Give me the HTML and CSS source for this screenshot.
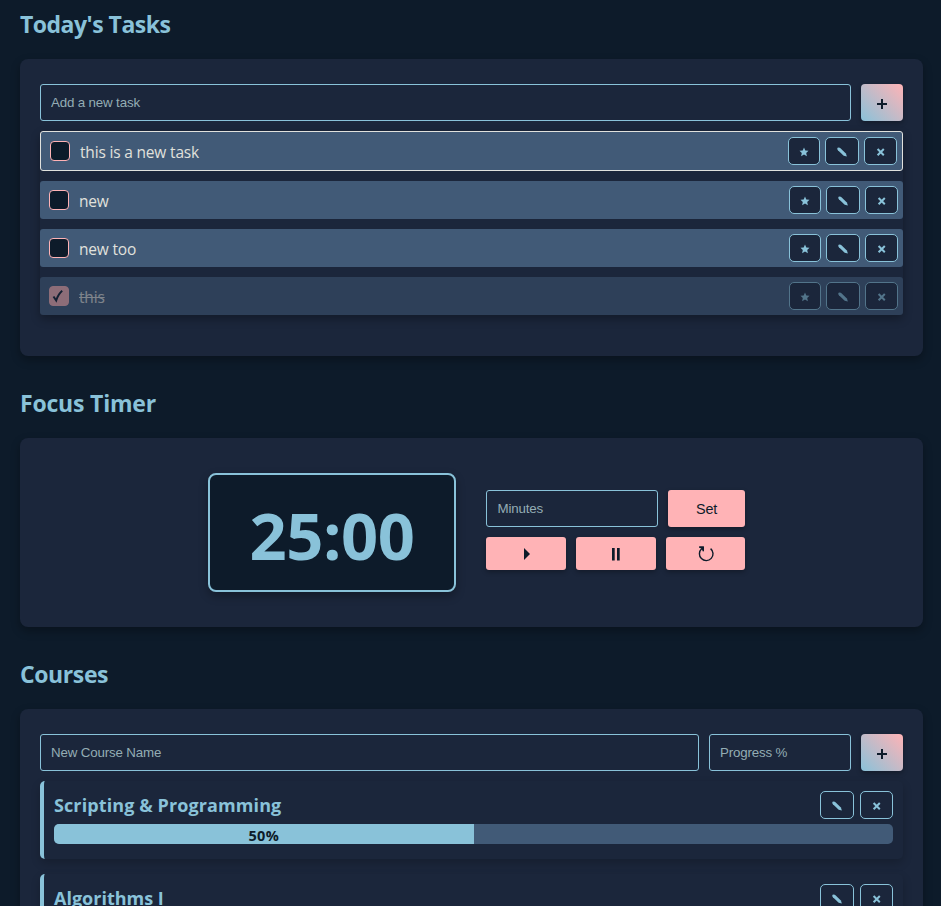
FILE: index.html
```html
<!DOCTYPE html>
<html lang="en">
<head>
<meta charset="utf-8">
<title>Study Dashboard</title>
<link rel="stylesheet" href="styles.css">
</head>
<body>
<svg class="sprite" width="0" height="0" aria-hidden="true">
  <symbol id="star" viewBox="0 0 10 10"><path d="M5 .6 6.3 3.5 9.5 3.8 7.2 6 7.9 9.2 5 7.6 2.1 9.2 2.8 6 .5 3.8 3.7 3.5Z"/></symbol>
  <symbol id="pencil" viewBox="0 0 10 10"><path d="M.2 2 .6 .7 1.9 .4 3.2 .9 8.9 6.4 9.9 9.6 6.7 8.8 .9 3.2Z"/></symbol>
  <symbol id="cross" viewBox="0 0 10 10"><path d="M1.6 2 7.8 8.2M7.8 2 1.6 8.2" fill="none" stroke="currentColor" stroke-width="2"/></symbol>
</svg>
<main>
  <h2 class="h-tasks">Today's Tasks</h2>
  <section class="card tasks">
    <div class="form-row">
      <input class="field grow" type="text" placeholder="Add a new task">
      <button class="add"><svg width="12" height="12" viewBox="0 0 12 12"><path d="M6 1V11M1 6H11"/></svg></button>
    </div>
    <ul class="task-list">
      <li class="task starred"><span class="check"></span><span class="name">this is a new task</span>
        <button class="icon w32"><svg><use href="#star"/></svg></button><button class="icon w34"><svg><use href="#pencil"/></svg></button><button class="icon w33"><svg><use href="#cross"/></svg></button></li>
      <li class="task"><span class="check"></span><span class="name">new</span>
        <button class="icon w32"><svg><use href="#star"/></svg></button><button class="icon w34"><svg><use href="#pencil"/></svg></button><button class="icon w33"><svg><use href="#cross"/></svg></button></li>
      <li class="task"><span class="check"></span><span class="name">new too</span>
        <button class="icon w32"><svg><use href="#star"/></svg></button><button class="icon w34"><svg><use href="#pencil"/></svg></button><button class="icon w33"><svg><use href="#cross"/></svg></button></li>
      <li class="task done"><span class="check"><svg width="12" height="14" viewBox="0 0 12 14"><path d="M1.5 7.5 4.2 11.5C5.5 7.5 7.5 4 10.2 1.8"/></svg></span><span class="name">this</span>
        <button class="icon w32"><svg><use href="#star"/></svg></button><button class="icon w34"><svg><use href="#pencil"/></svg></button><button class="icon w33"><svg><use href="#cross"/></svg></button></li>
    </ul>
  </section>

  <h2 class="h-timer">Focus Timer</h2>
  <section class="card timer">
    <div class="clock"><span>25:00</span></div>
    <div class="controls">
      <div class="control-row">
        <input class="field minutes" type="text" placeholder="Minutes">
        <button class="pink set">Set</button>
      </div>
      <div class="control-row">
        <button class="pink"><svg width="16" height="16" viewBox="0 0 16 16"><path d="M6 2V14L12 8Z"/></svg></button>
        <button class="pink"><svg width="16" height="16" viewBox="0 0 16 16"><path d="M4 2H6.7V14.5H4ZM9 2H11.7V14.5H9Z"/></svg></button>
        <button class="pink reset"><svg width="16" height="16" viewBox="0 0 16 16"><path class="line" d="M3.6 2.8A6.8 6.8 0 1 0 12.6 2.6M1.2 1.2H5.2V5.2"/><path d="M1 .6H5.8V5.4L4.4 4Z"/></svg></button>
      </div>
    </div>
  </section>

  <h2 class="h-courses">Courses</h2>
  <section class="card courses">
    <div class="form-row">
      <input class="field grow" type="text" placeholder="New Course Name">
      <input class="field progress-field" type="text" placeholder="Progress %">
      <button class="add"><svg width="12" height="12" viewBox="0 0 12 12"><path d="M6 1V11M1 6H11"/></svg></button>
    </div>
    <article class="course">
      <header><h3 class="scripting">Scripting &amp; Programming</h3>
        <button class="icon w34"><svg><use href="#pencil"/></svg></button><button class="icon w33"><svg><use href="#cross"/></svg></button></header>
      <div class="bar"><div class="fill" style="width:50%"><span>50%</span></div></div>
    </article>
    <article class="course">
      <header><h3>Algorithms I</h3>
        <button class="icon w34"><svg><use href="#pencil"/></svg></button><button class="icon w33"><svg><use href="#cross"/></svg></button></header>
      <div class="bar"></div>
    </article>
  </section>
</main>
</body>
</html>
```
FILE: styles.css
```css
* { box-sizing: border-box; }
html { height: 100%; overflow: hidden; background: #0d1b2a; }
body {
  margin: 0;
  height: 906px;
  overflow: hidden;
  color: #e0e1dd;
  font-family: "Segoe UI", "Open Sans", "Noto Sans", sans-serif;
}
.sprite { position: absolute; }
main { padding: 8px 18px 0 20px; }
h2 {
  margin: 0 0 19px;
  font-size: 23px;
  line-height: 32px;
  letter-spacing: -0.4px;
  color: #89c2d9;
}
.h-tasks { letter-spacing: -.5px; }
.h-timer { letter-spacing: -.2px; }
.card {
  margin-bottom: 31px;
  padding: 25px 20px;
  border-radius: 8px;
  background: #1b263b;
  box-shadow: 0 4px 10px rgba(0, 0, 0, .3);
}
.tasks { height: 297px; }
.form-row { display: flex; gap: 10px; margin-bottom: 10px; }
button { margin: 0; padding: 0; border: 0; display: flex; align-items: center; justify-content: center; flex: none; }
.field {
  width: 0;
  height: 37px;
  padding: 0 10px;
  border: 1px solid #89c2d9;
  border-radius: 3px;
  background: #1b263b;
  color: #e0e1dd;
  font: 13.333px "Liberation Sans", Arial, sans-serif;
  letter-spacing: -.16px;
}
.field::placeholder { color: #94adb4; opacity: 1; }
.grow { flex: 1; }
.progress-field { width: 142px; }
.add {
  width: 42px;
  height: 37px;
  border-radius: 4px;
  background: linear-gradient(45deg, #89c2d9, #ffb3b6);
  box-shadow: 0 2px 5px rgba(0, 0, 0, .3);
}
.add svg { position: relative; top: 1px; fill: none; stroke: #0d1b2a; stroke-width: 2; }
.task-list {
  display: flex;
  flex-direction: column;
  gap: 10px;
  margin: 0;
  padding: 0;
  list-style: none;
  border-radius: 4px;
  box-shadow: 0 4px 10px rgba(0, 0, 0, .3);
}
.task {
  display: flex;
  align-items: center;
  gap: 5px;
  padding: 5px 5px 5px 9px;
  border-radius: 3px;
  background: #415a77;
}
.starred { border: 1px solid #e0e1dd; }
.done { opacity: .5; }
.check {
  display: flex;
  align-items: center;
  justify-content: center;
  width: 20px;
  height: 20px;
  border: 1px solid #ffb3b6;
  border-radius: 4px;
  background: #0d1b2a;
}
.done .check { background: #ffb3b6; }
.check svg { margin-right: 2px; fill: none; stroke: #0d1b2a; stroke-width: 2; }
.name { flex: 1; padding-left: 5px; font-size: 15.5px; line-height: 20px; letter-spacing: -.18px; position: relative; top: 1px; }
.done .name { text-decoration: line-through; }
.icon {
  height: 28px;
  border: 1px solid #89c2d9;
  border-radius: 5px;
  background: #1b263b;
  color: #89c2d9;
}
.icon svg { position: relative; top: .5px; width: 10px; height: 10px; fill: currentColor; }
.w32 { width: 32px; }
.w33 { width: 33px; }
.w34 { width: 34px; }
.timer { display: flex; align-items: center; gap: 30px; height: 189px; padding: 35px 0 35px 188px; }
.clock {
  display: flex;
  align-items: center;
  justify-content: center;
  width: 248px;
  height: 119px;
  border: 2px solid #89c2d9;
  border-radius: 8px;
  background: #0d1b2a;
  box-shadow: 0 4px 10px rgba(0, 0, 0, .3);
  color: #89c2d9;
  font-size: 65px;
  font-weight: 700;
  line-height: 85px;
}
.clock span { position: relative; top: 3px; letter-spacing: -.4px; }
.controls { display: flex; flex-direction: column; gap: 10px; width: 259px; margin-top: -5px; }
.control-row { display: flex; gap: 10px; }
.minutes { width: 172px; padding-left: 10.5px; }
.pink {
  width: 80px;
  height: 33px;
  border-radius: 3px;
  background: #ffb3b6;
  color: #0d1b2a;
  box-shadow: 0 2px 5px rgba(0, 0, 0, .3);
  font: 14.4px "Liberation Sans", Arial, sans-serif;
  letter-spacing: -.2px;
}
.pink.set { width: 77px; height: 37px; }
.pink.reset { width: 79px; }
.pink svg { fill: #0d1b2a; }
.pink .line { fill: none; stroke: #0d1b2a; stroke-width: 1.4; }
.course {
  height: 78px;
  margin-bottom: 15px;
  padding: 10px;
  border-left: 4px solid #89c2d9;
  border-radius: 5px;
  box-shadow: 0 4px 10px rgba(0, 0, 0, .2);
}
.course header { display: flex; gap: 6px; margin-bottom: 5px; }
h3 { flex: 1; margin: 0; font-size: 18px; line-height: 28px; letter-spacing: 0; color: #89c2d9; }
.scripting { letter-spacing: .1px; }
.bar { height: 20px; border-radius: 5px; overflow: hidden; background: #415a77; }
.fill { height: 20px; background: #89c2d9; color: #0d1b2a; text-align: center; font-size: 14.5px; letter-spacing: .3px; font-weight: 700; line-height: 23px; }
```
